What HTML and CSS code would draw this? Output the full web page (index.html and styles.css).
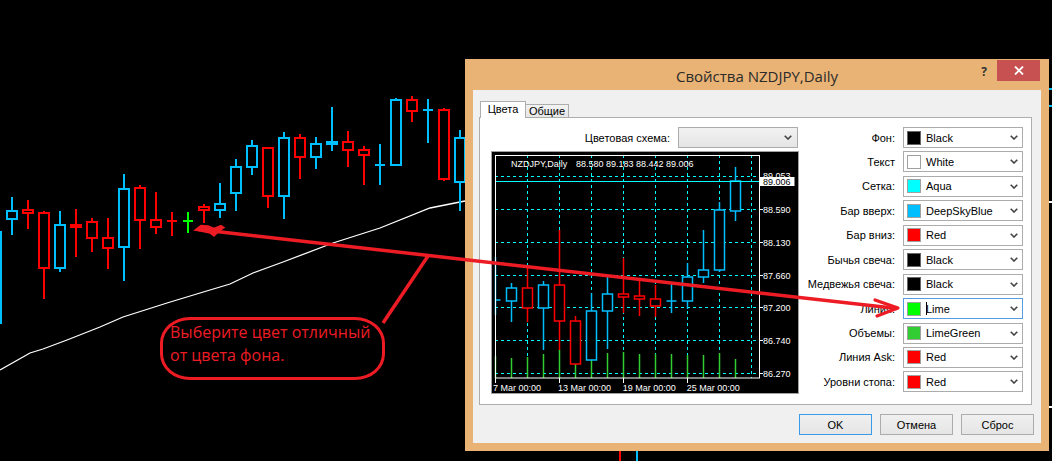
FILE: index.html
```html
<!DOCTYPE html>
<html lang="ru">
<head>
<meta charset="utf-8">
<title>Свойства NZDJPY,Daily</title>
<link rel="stylesheet" href="styles.css">
</head>
<body>
<div class="desktop">
  <svg class="bg-chart" width="1052" height="461" viewBox="0 0 1052 461">
    <polyline class="ma" points="0,370 30,353 43,349 67,340 100,327 123,317 167,303 200,293 230,284 253,273 283,262 333,243 380,228 430,208 465,201"/>
    <g class="up">
      <rect x="-9" y="232" width="10" height="91"/>
      <line x1="12" y1="197" x2="12" y2="235"/><rect x="7" y="211" width="10" height="8"/>
      <line x1="60" y1="211" x2="60" y2="272"/><rect x="55" y="225" width="10" height="43"/>
      <line x1="124" y1="174" x2="124" y2="281"/><rect x="119" y="189" width="10" height="58"/>
      <line x1="220" y1="183" x2="220" y2="218"/><rect x="215" y="204" width="10" height="6"/>
      <line x1="236" y1="159" x2="236" y2="211"/><rect x="231" y="167" width="10" height="26"/>
      <line x1="252" y1="140" x2="252" y2="175"/><rect x="247" y="146" width="10" height="21"/>
      <line x1="284" y1="132" x2="284" y2="219"/><rect x="279" y="138" width="10" height="58"/>
      <line x1="316" y1="137" x2="316" y2="169"/><rect x="311" y="144" width="10" height="13"/>
      <line x1="332" y1="107" x2="332" y2="151"/><rect x="327" y="142" width="10" height="2"/>
      <line x1="380" y1="144" x2="380" y2="185"/><line x1="375" y1="165" x2="385" y2="165"/>
      <line x1="396" y1="98" x2="396" y2="166"/><rect x="391" y="100" width="10" height="65"/>
      <line x1="428" y1="99" x2="428" y2="143"/><line x1="423" y1="110" x2="433" y2="110"/>
      <line x1="460" y1="130" x2="460" y2="211"/><rect x="455" y="138" width="10" height="44"/>
      <line x1="637" y1="450" x2="637" y2="461"/>
      <line x1="1049" y1="89" x2="1052" y2="89"/><line x1="1049" y1="106" x2="1052" y2="106"/>
    </g>
    <g class="dn">
      <line x1="28" y1="200" x2="28" y2="229"/><rect x="23" y="210" width="10" height="3"/>
      <line x1="44" y1="211" x2="44" y2="299"/><rect x="39" y="213" width="10" height="55"/>
      <line x1="76" y1="209" x2="76" y2="257"/><rect x="71" y="225" width="10" height="2"/>
      <line x1="92" y1="218" x2="92" y2="252"/><rect x="87" y="222" width="10" height="16"/>
      <line x1="108" y1="218" x2="108" y2="269"/><rect x="103" y="238" width="10" height="10"/>
      <line x1="140" y1="185" x2="140" y2="249"/><rect x="135" y="188" width="10" height="32"/>
      <line x1="156" y1="192" x2="156" y2="234"/><rect x="151" y="220" width="10" height="7"/>
      <line x1="172" y1="212" x2="172" y2="236"/><line x1="167" y1="221" x2="177" y2="221"/>
      <line x1="204" y1="204" x2="204" y2="223"/><rect x="199" y="207" width="10" height="3"/>
      <line x1="268" y1="147" x2="268" y2="208"/><rect x="263" y="148" width="10" height="48"/>
      <line x1="300" y1="134" x2="300" y2="179"/><rect x="295" y="138" width="10" height="19"/>
      <line x1="348" y1="131" x2="348" y2="167"/><rect x="343" y="142" width="10" height="8"/>
      <line x1="364" y1="146" x2="364" y2="185"/><rect x="359" y="150" width="10" height="5"/>
      <line x1="412" y1="96" x2="412" y2="122"/><rect x="407" y="100" width="10" height="11"/>
      <line x1="444" y1="108" x2="444" y2="181"/><rect x="439" y="110" width="10" height="69"/>
      <line x1="620" y1="450" x2="620" y2="461"/>
    </g>
    <g class="lime">
      <line x1="188" y1="212" x2="188" y2="233"/><line x1="183" y1="221" x2="193" y2="221"/>
    </g>
    <g class="wt">
      <line x1="1049" y1="202" x2="1052" y2="202"/><line x1="1049" y1="407" x2="1052" y2="407"/>
    </g>
  </svg>

  <section class="dialog">
    <header class="titlebar">
      <h1 class="title">Свойства NZDJPY,Daily</h1>
      <div class="caption-btns">
        <span class="help">?</span>
        <span class="close"><svg width="10" height="9" viewBox="0 0 10 9"><path d="M1 0.5 L9 8.5 M9 0.5 L1 8.5"/></svg></span>
      </div>
    </header>
    <div class="client">
      <div class="tabs">
        <div class="tab active">Цвета</div>
        <div class="tab">Общие</div>
      </div>
      <div class="panel">
        <div class="left-col">
          <div class="scheme-row">
            <span class="scheme-label">Цветовая схема:</span>
            <div class="combo"><svg class="chev" width="8" height="5" viewBox="0 0 8 5"><polyline points="0.7,0.7 4,4 7.3,0.7"/></svg></div>
          </div>
          <div class="preview">
            <svg width="306" height="241" viewBox="0 0 306 241">
              <g class="grid">
                <line x1="3" y1="24.5" x2="267" y2="24.5"/>
                <line x1="3" y1="57.5" x2="267" y2="57.5"/>
                <line x1="3" y1="90.5" x2="267" y2="90.5"/>
                <line x1="3" y1="123.5" x2="267" y2="123.5"/>
                <line x1="3" y1="155.5" x2="267" y2="155.5"/>
                <line x1="3" y1="188.5" x2="267" y2="188.5"/>
                <line x1="3" y1="221.5" x2="267" y2="221.5"/>
                <line x1="35.5" y1="3" x2="35.5" y2="226"/>
                <line x1="67.5" y1="3" x2="67.5" y2="226"/>
                <line x1="99.5" y1="3" x2="99.5" y2="226"/>
                <line x1="131.5" y1="3" x2="131.5" y2="226"/>
                <line x1="163.5" y1="3" x2="163.5" y2="226"/>
                <line x1="195.5" y1="3" x2="195.5" y2="226"/>
                <line x1="227.5" y1="3" x2="227.5" y2="226"/>
                <line x1="259.5" y1="3" x2="259.5" y2="226"/>
              </g>
              <g class="vol">
                <line x1="3.5" y1="204" x2="3.5" y2="226"/><line x1="19.5" y1="206" x2="19.5" y2="226"/>
                <line x1="35.5" y1="205" x2="35.5" y2="226"/><line x1="51.5" y1="202" x2="51.5" y2="226"/>
                <line x1="67.5" y1="198" x2="67.5" y2="226"/><line x1="83.5" y1="201" x2="83.5" y2="226"/>
                <line x1="99.5" y1="201" x2="99.5" y2="226"/><line x1="115.5" y1="201" x2="115.5" y2="226"/>
                <line x1="131.5" y1="200" x2="131.5" y2="226"/><line x1="147.5" y1="202" x2="147.5" y2="226"/>
                <line x1="163.5" y1="202" x2="163.5" y2="226"/><line x1="179.5" y1="202" x2="179.5" y2="226"/>
                <line x1="195.5" y1="203" x2="195.5" y2="226"/><line x1="211.5" y1="203" x2="211.5" y2="226"/>
                <line x1="227.5" y1="201" x2="227.5" y2="226"/><line x1="243.5" y1="207" x2="243.5" y2="226"/>
              </g>
              <g class="p-up">
                <line x1="3.5" y1="105" x2="3.5" y2="163"/><line x1="3.5" y1="148" x2="8.5" y2="148"/>
                <line x1="19.5" y1="131" x2="19.5" y2="170"/><rect x="14.5" y="136" width="10" height="13"/>
                <line x1="51.5" y1="129" x2="51.5" y2="198"/><rect x="46.5" y="133" width="10" height="23"/>
                <line x1="99.5" y1="141" x2="99.5" y2="208"/><rect x="94.5" y="159" width="10" height="49"/>
                <line x1="115.5" y1="125" x2="115.5" y2="197"/><rect x="110.5" y="142" width="10" height="17"/>
                <line x1="179.5" y1="130" x2="179.5" y2="161"/><line x1="174.5" y1="149" x2="184.5" y2="149"/>
                <line x1="195.5" y1="111" x2="195.5" y2="157"/><rect x="190.5" y="125" width="10" height="24"/>
                <line x1="211.5" y1="78" x2="211.5" y2="131"/><rect x="206.5" y="118" width="10" height="7"/>
                <line x1="227.5" y1="50" x2="227.5" y2="120"/><rect x="222.5" y="58" width="10" height="60"/>
                <line x1="243.5" y1="15" x2="243.5" y2="69"/><rect x="238.5" y="29" width="10" height="30"/>
              </g>
              <g class="p-dn">
                <line x1="35.5" y1="116" x2="35.5" y2="170"/><rect x="30.5" y="136" width="10" height="20"/>
                <line x1="67.5" y1="78" x2="67.5" y2="198"/><rect x="62.5" y="133" width="10" height="36"/>
                <line x1="83.5" y1="164" x2="83.5" y2="212"/><rect x="78.5" y="169" width="10" height="43"/>
                <line x1="131.5" y1="106" x2="131.5" y2="161"/><rect x="126.5" y="142" width="10" height="3"/>
                <line x1="147.5" y1="127" x2="147.5" y2="164"/><rect x="142.5" y="144" width="10" height="3"/>
                <line x1="163.5" y1="133" x2="163.5" y2="165"/><rect x="158.5" y="147" width="10" height="7"/>
              </g>
              <line class="bid" x1="3" y1="29.5" x2="267" y2="29.5"/>
              <rect class="frame" x="3.5" y="3.5" width="264" height="222.5"/>
              <g class="ticks">
                <line x1="267" y1="29.5" x2="271" y2="29.5"/>
                <line x1="267" y1="57.5" x2="271" y2="57.5"/>
                <line x1="267" y1="90.5" x2="271" y2="90.5"/>
                <line x1="267" y1="123.5" x2="271" y2="123.5"/>
                <line x1="267" y1="155.5" x2="271" y2="155.5"/>
                <line x1="267" y1="188.5" x2="271" y2="188.5"/>
                <line x1="267" y1="221.5" x2="271" y2="221.5"/>
                <line x1="3.5" y1="226" x2="3.5" y2="231"/>
                <line x1="67.5" y1="226" x2="67.5" y2="231"/>
                <line x1="131.5" y1="226" x2="131.5" y2="231"/>
                <line x1="195.5" y1="226" x2="195.5" y2="231"/>
              </g>
              <g class="ptext">
                <text x="19" y="15">NZDJPY,Daily</text>
                <text x="84" y="15">88.580 89.183 88.442 89.006</text>
                <text x="271" y="26.5">89.053</text>
                <text x="271" y="61.3">88.590</text>
                <text x="271" y="93.8">88.130</text>
                <text x="271" y="126.8">87.660</text>
                <text x="271" y="159.3">87.200</text>
                <text x="271" y="192.3">86.740</text>
                <text x="271" y="225.3">86.270</text>
                <text x="1" y="238.5">7 Mar 00:00</text>
                <text x="66" y="238.5">13 Mar 00:00</text>
                <text x="130.7" y="238.5">19 Mar 00:00</text>
                <text x="194.7" y="238.5">25 Mar 00:00</text>
              </g>
              <rect class="bidbox" x="268" y="25" width="34.5" height="9"/>
              <text class="bidtext" x="271" y="32.6">89.006</text>
            </svg>
          </div>
        </div>
        <div class="color-grid">
          <span class="lbl">Фон:</span>
          <div class="dd"><i class="sw sw-black"></i><span class="val">Black</span><svg class="chev" width="8" height="5" viewBox="0 0 8 5"><polyline points="0.7,0.7 4,4 7.3,0.7"/></svg></div>
          <span class="lbl">Текст</span>
          <div class="dd"><i class="sw sw-white"></i><span class="val">White</span><svg class="chev" width="8" height="5" viewBox="0 0 8 5"><polyline points="0.7,0.7 4,4 7.3,0.7"/></svg></div>
          <span class="lbl">Сетка:</span>
          <div class="dd"><i class="sw sw-aqua"></i><span class="val">Aqua</span><svg class="chev" width="8" height="5" viewBox="0 0 8 5"><polyline points="0.7,0.7 4,4 7.3,0.7"/></svg></div>
          <span class="lbl">Бар вверх:</span>
          <div class="dd"><i class="sw sw-dsb"></i><span class="val">DeepSkyBlue</span><svg class="chev" width="8" height="5" viewBox="0 0 8 5"><polyline points="0.7,0.7 4,4 7.3,0.7"/></svg></div>
          <span class="lbl">Бар вниз:</span>
          <div class="dd"><i class="sw sw-red"></i><span class="val">Red</span><svg class="chev" width="8" height="5" viewBox="0 0 8 5"><polyline points="0.7,0.7 4,4 7.3,0.7"/></svg></div>
          <span class="lbl">Бычья свеча:</span>
          <div class="dd"><i class="sw sw-black"></i><span class="val">Black</span><svg class="chev" width="8" height="5" viewBox="0 0 8 5"><polyline points="0.7,0.7 4,4 7.3,0.7"/></svg></div>
          <span class="lbl">Медвежья свеча:</span>
          <div class="dd"><i class="sw sw-black"></i><span class="val">Black</span><svg class="chev" width="8" height="5" viewBox="0 0 8 5"><polyline points="0.7,0.7 4,4 7.3,0.7"/></svg></div>
          <span class="lbl">Линия:</span>
          <div class="dd focus"><i class="sw sw-lime"></i><span class="caret"></span><span class="val">Lime</span><svg class="chev" width="8" height="5" viewBox="0 0 8 5"><polyline points="0.7,0.7 4,4 7.3,0.7"/></svg></div>
          <span class="lbl">Объемы:</span>
          <div class="dd"><i class="sw sw-limegreen"></i><span class="val">LimeGreen</span><svg class="chev" width="8" height="5" viewBox="0 0 8 5"><polyline points="0.7,0.7 4,4 7.3,0.7"/></svg></div>
          <span class="lbl">Линия Ask:</span>
          <div class="dd"><i class="sw sw-red"></i><span class="val">Red</span><svg class="chev" width="8" height="5" viewBox="0 0 8 5"><polyline points="0.7,0.7 4,4 7.3,0.7"/></svg></div>
          <span class="lbl">Уровни стопа:</span>
          <div class="dd"><i class="sw sw-red"></i><span class="val">Red</span><svg class="chev" width="8" height="5" viewBox="0 0 8 5"><polyline points="0.7,0.7 4,4 7.3,0.7"/></svg></div>
        </div>
      </div>
      <div class="buttons">
        <button class="btn default">OK</button>
        <button class="btn">Отмена</button>
        <button class="btn">Сброс</button>
      </div>
    </div>
  </section>

  <div class="bubble">Выберите цвет отличный<br>от цвета фона.</div>

  <svg class="annot" width="1052" height="461" viewBox="0 0 1052 461">
    <line x1="199" y1="229.5" x2="897" y2="308.5"/>
    <line x1="383" y1="323" x2="428" y2="256"/>
    <path class="head" d="M875 300 L898 308 L877 316"/>
    <path class="blob" d="M195 230 L201 225.5 L208 226 L214 228.5 L221 225.5 L224 227.5 L218 232 L214 236 L210 233 L203 231.5 Z"/>
  </svg>
</div>
</body>
</html>
```

FILE: styles.css
```css
* { box-sizing: border-box; margin: 0; padding: 0; }
html, body { width: 1052px; height: 461px; overflow: hidden; background: #000; }
body { font-family: "Liberation Sans", Arial, sans-serif; font-size: 11px; color: #000; }

.desktop { position: relative; width: 1052px; height: 461px; background: #000; overflow: hidden; }

/* background chart */
.bg-chart { position: absolute; left: 0; top: 0; }
.bg-chart .ma { fill: none; stroke: #fff; stroke-width: 1.3; }
.bg-chart rect { fill: #000; stroke-width: 2; }
.bg-chart line { stroke-width: 2; }
.bg-chart .up line, .bg-chart .up rect { stroke: #00bfff; }
.bg-chart .dn line, .bg-chart .dn rect { stroke: #ff0000; }
.bg-chart .lime line { stroke: #00ff00; }
.bg-chart .wt line { stroke: #fff; }

/* dialog window */
.dialog {
  position: absolute; left: 465px; top: 59px;
  width: 584px; height: 392px;
  background: #e9b375;
  padding: 0 8px 8px;
  display: flex; flex-direction: column;
}
.titlebar {
  height: 31px; flex: none;
  display: grid; grid-template-columns: 1fr auto 1fr; align-items: start;
}
.title {
  grid-column: 2;
  font: 400 15px/20px "Open Sans", "Noto Sans", sans-serif;
  color: #2b2b2b; margin-top: 7px; white-space: nowrap;
}
.caption-btns { grid-column: 3; justify-self: end; display: flex; align-items: flex-start; margin-right: 1px; }
.help { font: 700 12px/14px "Open Sans", sans-serif; color: #333; margin: 6px 10px 0 0; }
.close {
  width: 43px; height: 21px; margin-top: 1px;
  background: #c75050;
  display: flex; align-items: center; justify-content: center;
}
.close svg path { stroke: #fff; stroke-width: 1.8; fill: none; }

.client {
  flex: 1; background: #f0f0f0;
  padding: 11px 8px 8px 6px;
  display: flex; flex-direction: column;
}
.tabs { display: flex; align-items: flex-end; height: 16px; margin-left: 1px; position: relative; z-index: 1; }
.tab {
  height: 13px; width: 43px;
  border: 1px solid #adadad; border-bottom: none; border-left: none;
  background: linear-gradient(#f3f3f3, #e6e6e6);
  text-align: center; line-height: 12px; font-size: 11px;
}
.tab.active {
  height: 17px; width: 46px; margin-bottom: -1px;
  border-left: 1px solid #adadad;
  background: #fff; line-height: 14px;
}
.panel {
  height: 288px; margin-right: 1px;
  border: 1px solid #adadad; background: #fff;
  display: flex; padding: 9px 8px 0 11px;
}
.left-col { width: 308px; flex: none; display: flex; flex-direction: column; gap: 3px; }
.scheme-row { display: flex; justify-content: flex-end; align-items: center; gap: 8px; height: 21px; padding-right: 1px; }
.combo {
  width: 120px; height: 21px;
  border: 1px solid #acacac;
  background: linear-gradient(#f2f2f2, #e5e5e5);
  display: flex; align-items: center; justify-content: flex-end; padding-right: 5px;
}
.chev polyline { fill: none; stroke: #444; stroke-width: 1.6; }
.preview { width: 308px; height: 243px; border: 1px solid #a0a0a0; background: #000; }
.preview svg { display: block; }
.grid line { stroke: #00ffff; stroke-width: 1; stroke-dasharray: 3 3; }
.vol line { stroke: #32cd32; stroke-width: 1.5; }
.p-up line, .p-up rect { stroke: #00bfff; stroke-width: 1.5; }
.p-dn line, .p-dn rect { stroke: #ff0000; stroke-width: 1.5; }
.preview rect { fill: #000; }
.bid { stroke: #00ffff; stroke-width: 1; }
.preview .frame { fill: none; stroke: #fff; stroke-width: 1; }
.ticks line { stroke: #fff; stroke-width: 1; }
.ptext text { fill: #fff; font: 9px "Liberation Sans", Arial, sans-serif; }
.preview .bidbox { fill: #fff; stroke: none; }
.bidtext { fill: #000; font: 9px "Liberation Sans", Arial, sans-serif; }

.color-grid {
  flex: 1;
  display: grid; grid-template-columns: 1fr 120px;
  grid-auto-rows: 21px; column-gap: 8px; row-gap: 3.45px;
}
.lbl { justify-self: end; align-self: center; white-space: nowrap; }
.dd {
  height: 21px; border: 1px solid #acacac; background: #fff;
  display: flex; align-items: center; padding-left: 3px;
}
.dd.focus { border-color: #569de5; }
.sw { display: block; width: 14px; height: 14px; border: 1px solid #8a8a8a; margin-right: 5px; flex: none; }
.sw-black { background: #000; border-color: #666; }
.sw-white { background: #fff; border-color: #a0a0a0; }
.sw-aqua { background: #00ffff; border-color: #a0a0a0; }
.sw-dsb { background: #00bfff; border-color: #a0a0a0; }
.sw-red { background: #ff0000; border-color: #a0a0a0; }
.sw-lime { background: #00ff00; border-color: #a0a0a0; }
.sw-limegreen { background: #32cd32; border-color: #a0a0a0; }
.caret { display: block; width: 1px; height: 13px; background: #000; margin-right: -1px; }
.val { flex: 1; white-space: nowrap; }
.dd .chev { margin-right: 4px; flex: none; }

.buttons { display: flex; justify-content: flex-end; gap: 8px; margin-top: 9px; margin-right: -1px; }
.btn {
  width: 73px; height: 21px;
  border: 1px solid #acacac;
  background: linear-gradient(#f0f0f0, #e5e5e5);
  font: 11px "Liberation Sans", Arial, sans-serif; color: #000;
}
.btn.default { border-color: #3c9be8; }

/* annotation */
.bubble {
  position: absolute; left: 160px; top: 317px;
  width: 225px; height: 63px;
  border: 3px solid #ed1c24; border-radius: 30px / 26px;
  color: #ed1c24;
  font: 16px/23px "Open Sans", "Noto Sans", sans-serif;
  padding: 1px 0 0 7px;
  white-space: nowrap;
}
.annot { position: absolute; left: 0; top: 0; pointer-events: none; }
.annot line { stroke: #ed1c24; stroke-width: 3.5; }
.annot .head { fill: none; stroke: #ed1c24; stroke-width: 3.2; stroke-linejoin: round; stroke-linecap: round; }
.annot .blob { fill: #ed1c24; stroke: #ed1c24; stroke-width: 1.5; }
```
